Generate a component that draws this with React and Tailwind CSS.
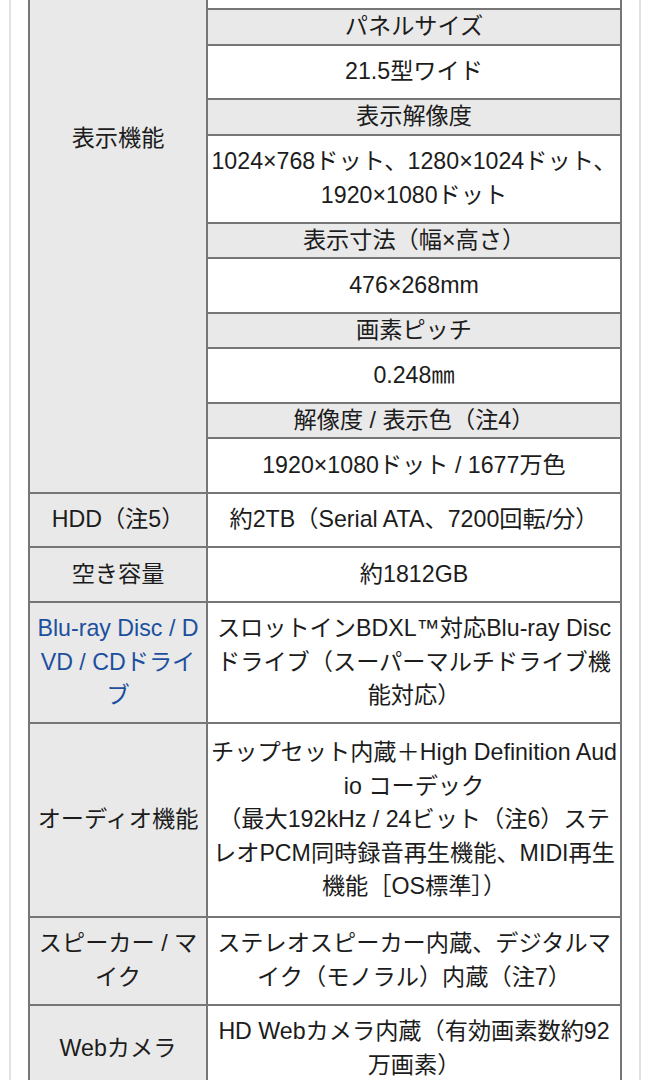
import React from "react";

const FONT = {
  fontFamily:
    '"Liberation Sans", Arial, "Noto Sans CJK JP", "Noto Sans CJK SC", sans-serif',
};

function Lines({ lines }) {
  return lines.map((l, i) => (
    <React.Fragment key={i}>
      {i > 0 && <br />}
      {l}
    </React.Fragment>
  ));
}

const th =
  "border-2 border-[#767676] bg-[#e9e9e9] text-center align-middle px-[3px] py-0 font-normal leading-[33.5px]";
const td =
  "border-2 border-[#767676] bg-white text-center align-middle px-[3px] py-[9.5px] leading-[33.5px] break-all";
const lh =
  "border-2 border-[#767676] bg-[#e9e9e9] text-center align-middle px-[4px] py-[9.5px] font-normal leading-[33.5px] break-all";

function SubHead({ children }) {
  return (
    <tr>
      <td className={th}>{children}</td>
    </tr>
  );
}

function SubVal({ lines }) {
  return (
    <tr>
      <td className={td}>
        <Lines lines={lines} />
      </td>
    </tr>
  );
}

function Row({ label, lines, link, extra = "" }) {
  return (
    <tr>
      <th className={lh}>
        {link ? (
          <span className="text-[#1d4f9f]">
            <Lines lines={label} />
          </span>
        ) : (
          <Lines lines={label} />
        )}
      </th>
      <td className={td + " " + extra}>
        <Lines lines={lines} />
      </td>
    </tr>
  );
}

export default function App() {
  return (
    <div className="bg-white min-h-[1080px]" style={FONT}>
      <div className="ml-[9px] w-[632px] h-[1080px] overflow-hidden border-x-2 border-[#e2e2e2] px-[17px]">
        <table className="w-[594px] table-fixed border-collapse -mt-[3px] text-[23.2px] text-[#1c1c1c]">
          <colgroup>
            <col className="w-[178px]" />
            <col />
          </colgroup>
          <tbody>
            <tr>
              <th
                rowSpan={11}
                className="border-2 border-[#767676] bg-[#e9e9e9] text-center align-top px-[4px] pt-[123px] font-normal leading-[33.5px]"
              >
                表示機能
              </th>
              <td className="border-2 border-[#767676] bg-white h-[11px] p-0"></td>
            </tr>
            <SubHead>パネルサイズ</SubHead>
            <SubVal lines={["21.5型ワイド"]} />
            <SubHead>表示解像度</SubHead>
            <SubVal
              lines={["1024×768ドット、1280×1024ドット、", "1920×1080ドット"]}
            />
            <SubHead>表示寸法（幅×高さ）</SubHead>
            <SubVal lines={["476×268mm"]} />
            <SubHead>画素ピッチ</SubHead>
            <SubVal lines={["0.248㎜"]} />
            <SubHead>解像度 / 表示色（注4）</SubHead>
            <SubVal lines={["1920×1080ドット / 1677万色"]} />
            <Row label={["HDD（注5）"]} lines={["約2TB（Serial ATA、7200回転/分）"]} />
            <Row label={["空き容量"]} lines={["約1812GB"]} />
            <Row
              link
              label={["Blu-ray Disc / D", "VD / CDドライ", "ブ"]}
              lines={[
                "スロットインBDXL™対応Blu-ray Disc",
                "ドライブ（スーパーマルチドライブ機",
                "能対応）",
              ]}
            />
            <Row
              label={["オーディオ機能"]}
              extra="!py-[12px]"
              lines={[
                "チップセット内蔵＋High Definition Aud",
                "io コーデック",
                "（最大192kHz / 24ビット（注6）ステ",
                "レオPCM同時録音再生機能、MIDI再生",
                "機能［OS標準］）",
              ]}
            />
            <Row
              label={["スピーカー / マ", "イク"]}
              lines={["ステレオスピーカー内蔵、デジタルマ", "イク（モノラル）内蔵（注7）"]}
            />
            <Row
              label={["Webカメラ"]}
              lines={["HD Webカメラ内蔵（有効画素数約92", "万画素）"]}
            />
          </tbody>
        </table>
      </div>
    </div>
  );
}
